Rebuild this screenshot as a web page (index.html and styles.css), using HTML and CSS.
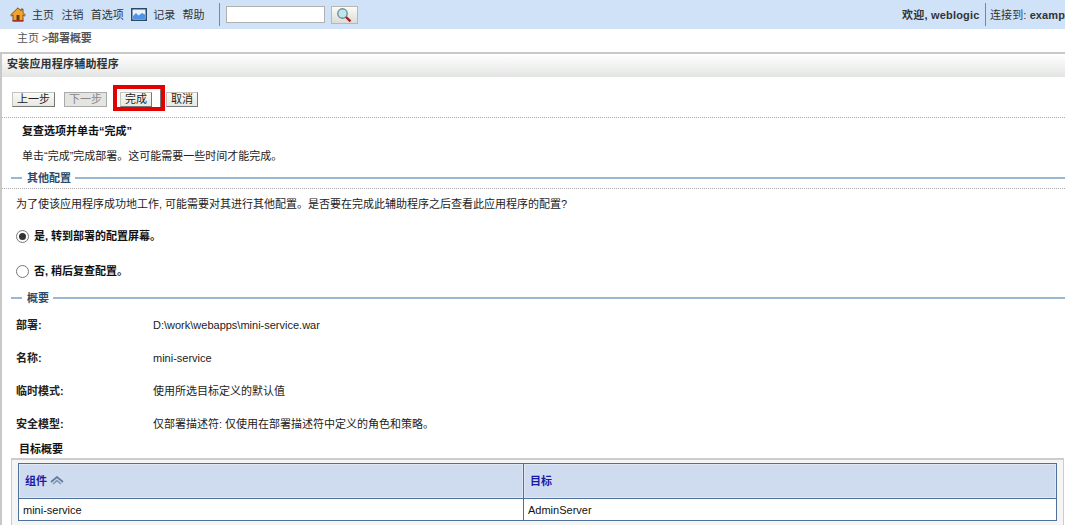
FILE: index.html
```html
<!DOCTYPE html>
<html lang="zh">
<head>
<meta charset="utf-8">
<title>安装应用程序辅助程序</title>
<link rel="stylesheet" href="styles.css">
</head>
<body>
<header class="topbar">
  <nav class="tools">
    <svg class="ico-home" viewBox="0 0 16 15" width="16" height="15"><path d="M8 .8 .6 8l1.100 1L3 7.900V14h10V7.900L14.300 9l1.100-1L13 5.700V2h-2v1.800z" fill="#f2a32e" stroke="#6e4a1c" stroke-width=".9"/><rect x="6.500" y="8" width="3" height="5.500" fill="#6a3a12"/><rect x="2.500" y="13" width="11" height="1.500" fill="#a8321e"/></svg>
    <a class="tool">主页</a>
    <a class="tool">注销</a>
    <a class="tool">首选项</a>
    <svg class="ico-chart" viewBox="0 0 16 13" width="16" height="13"><rect x=".75" y=".75" width="14.500" height="11.500" fill="#e9f2fb" stroke="#2b4a66" stroke-width="1.500"/><path d="M2 10V8l3-3 2.500 2.500L11 5l3 1.500V11H2z" fill="#4f94e6"/></svg>
    <a class="tool">记录</a>
    <a class="tool">帮助</a>
    <span class="vsep"></span>
    <input class="search" type="text" aria-label="搜索">
    <button class="search-btn" aria-label="搜索"><svg viewBox="0 0 16 16" width="16" height="16"><circle cx="6.500" cy="6.500" r="4.700" fill="#bfe6ee" stroke="#6f8f98" stroke-width="1.400"/><path d="m10 10 4.500 4.300" stroke="#a01e28" stroke-width="2.300"/></svg></button>
  </nav>
  <div class="status">
    <span class="welcome">欢迎, weblogic</span>
    <span class="status-sep"></span>
    <span class="conn">连接到: <b>example</b></span>
  </div>
</header>
<div class="crumbs">主页 &gt;<b>部署概要</b></div>
<main class="panel">
  <h1 class="panel-title">安装应用程序辅助程序</h1>
  <div class="actions">
    <button class="btn">上一步</button>
    <button class="btn btn-off">下一步</button>
    <span class="highlight"><button class="btn">完成</button></span>
    <button class="btn">取消</button>
  </div>
  <h2 class="intro-title">复查选项并单击“完成”</h2>
  <p class="intro">单击“完成”完成部署。这可能需要一些时间才能完成。</p>
  <div class="legend"><span class="rule-short"></span><span class="legend-text">其他配置</span><span class="rule-long"></span></div>
  <p class="question">为了使该应用程序成功地工作, 可能需要对其进行其他配置。是否要在完成此辅助程序之后查看此应用程序的配置?</p>
  <label class="choice choice-yes"><span class="radio radio-on"></span>是, 转到部署的配置屏幕。</label>
  <label class="choice choice-no"><span class="radio"></span>否, 稍后复查配置。</label>
  <div class="legend legend-2"><span class="rule-short"></span><span class="legend-text">概要</span><span class="rule-long"></span></div>
  <dl class="summary">
    <dt>部署:</dt><dd>D:\work\webapps\mini-service.war</dd>
    <dt>名称:</dt><dd>mini-service</dd>
    <dt>临时模式:</dt><dd>使用所选目标定义的默认值</dd>
    <dt>安全模型:</dt><dd>仅部署描述符: 仅使用在部署描述符中定义的角色和策略。</dd>
  </dl>
  <h3 class="table-title">目标概要</h3>
  <div class="table-wrap">
    <table class="targets">
      <thead><tr><th class="col-a">组件 <svg class="sort" viewBox="0 0 14 10" width="14" height="10"><path d="M1 6 7 1l6 5" fill="none" stroke="#5f7c9e" stroke-width="1.700"/><path d="M3 8 7 4.600 11 8" fill="none" stroke="#7f97b5" stroke-width="1.500"/></svg></th><th>目标</th></tr></thead>
      <tbody><tr><td>mini-service</td><td>AdminServer</td></tr></tbody>
    </table>
  </div>
</main>
</body>
</html>
```
FILE: styles.css
```css
* { box-sizing: border-box; }
html, body { margin: 0; height: 525px; overflow: hidden; background: #fff; }
body {
  width: 1065px;
  font: 11px/14px Tahoma, "Liberation Sans", "Noto Sans CJK SC", sans-serif;
  color: #222;
}
.topbar {
  height: 29px;
  background: #cfe2f8;
  display: flex;
  justify-content: space-between;
  align-items: center;
  white-space: nowrap;
}
.tools { display: flex; align-items: center; padding-left: 10px; }
.ico-home { margin-right: 6px; }
.tool { color: #333; margin-right: 7.4px; }
.ico-chart { margin-right: 6px; }
.vsep { width: 1px; height: 23px; background: #7d8790; margin: 0 6px 0 7px; }
.search { width: 99px; height: 17px; border: 1px solid #b0b0b0; background: #fff; padding: 0; }
.search-btn {
  width: 27px; height: 18px; margin-left: 6px; padding: 0;
  border: 1px solid #b8b8b0; background: linear-gradient(#fbfbf8, #dcdcd6);
  display: flex; align-items: center; justify-content: center;
}
.status { display: flex; align-items: center; width: 163px; overflow: hidden; flex: none; }
.welcome { font-weight: bold; color: #333; letter-spacing: .2px; flex: none; width: 83px; }
.status-sep { width: 1px; height: 23px; background: #7d8790; margin: 0 4px 0 0; flex: none; }
.conn { color: #333; white-space: nowrap; letter-spacing: .1px; }
.crumbs { height: 23px; padding: 3px 0 0 17px; color: #555; line-height: 13px; letter-spacing: -.1px; }
.panel { border-left: 2px solid #c8c8c8; border-top: 2px solid #c8c8c8; height: 473px; overflow: hidden; }
.panel-title {
  margin: 0; height: 23px; font-size: 11px; line-height: 20px; padding-left: 5px; color: #333;
  letter-spacing: .2px;
  background: linear-gradient(#fff, #e3e5e3);
}
.actions { display: flex; align-items: flex-start; padding: 15px 0 0 10px; height: 41px; border-bottom: 1px dotted #aaa; }
.btn {
  height: 15px; padding: 0; width: 43px; font: 11px/13px Tahoma, "Liberation Sans", "Noto Sans CJK SC", sans-serif;
  color: #222; background: linear-gradient(#fafaf6, #e8e8e2); border: 1px solid #c4c4bc; border-right-color: #777; border-bottom-color: #777;
  margin-right: 9px;
}
.btn-off { color: #888; background: #e4e4e0; border-color: #aaa; }
.highlight {
  display: flex; align-items: stretch;
  width: 52px; height: 26px; border: 4px solid #e30000; margin: -7px 1px 0 -3px; flex: none;
}
.highlight::after { content: ""; width: 1px; height: 18px; background: #777; margin-left: auto; }
.highlight .btn { margin: 3px 0 0 3px; width: 32px; }
.actions > .btn:last-child { width: 32px; margin: 0; }
.intro-title { margin: 0; padding: 6px 0 0 20px; font-size: 11px; line-height: 14px; color: #111; }
.intro { margin: 0; padding: 11px 0 0 20px; line-height: 14px; }
.legend { display: flex; align-items: center; height: 14px; margin-top: 8px; padding-left: 9px; color: #2b4a6b; font-weight: bold; }
.rule-short { width: 11px; height: 2px; background: #9db6d4; }
.rule-long { flex: 1; height: 2px; background: #9db6d4; }
.legend-text { padding: 0 4px 0 5px; }
.question { margin: 3px 0 0; border-top: 1px dotted #aaa; padding: 8px 0 0 14px; white-space: nowrap; line-height: 14px; }
.choice { display: flex; align-items: center; font-weight: bold; color: #111; padding-left: 14px; height: 14px; }
.choice-yes { margin-top: 18px; }
.choice-no { margin-top: 21px; }
.radio { width: 13px; height: 13px; border: 1px solid #777; border-radius: 50%; margin-right: 5px; background: #fff; display: flex; align-items: center; justify-content: center; }
.radio-on::after { content: ""; width: 7px; height: 7px; border-radius: 50%; background: #333; }
.legend-2 { margin-top: 13px; }
.summary { margin: 13px 0 0; display: grid; grid-template-columns: 137px 1fr; padding-left: 14px; row-gap: 19px; }
.summary dt { font-weight: bold; color: #222; line-height: 14px; }
.summary dd { margin: 0; line-height: 14px; }
.table-title { margin: 11px 0 0 17px; font-size: 11px; line-height: 14px; color: #111; }
.table-wrap { margin: 2px 0 0 9px; width: 1053px; height: 80px; background: #f5f5f5; border: 1px solid #ccc; border-top-width: 2px; padding: 3px 5px 0 6px; }
.targets { width: 1039px; border-collapse: collapse; background: #fff; table-layout: fixed; }
.targets th { height: 35px; background: #cfdcef; color: #1a1aa8; text-align: left; padding: 0 6px; border: 1px solid #4f7099; box-shadow: inset 0 0 0 1px #dfe8f4; font-size: 11px; font-weight: bold; }
.targets th .sort { vertical-align: -1px; }
.targets td { height: 22px; padding: 0 4px; border: 1px solid #4f7099; color: #111; }
.col-a { width: 505px; }
```
